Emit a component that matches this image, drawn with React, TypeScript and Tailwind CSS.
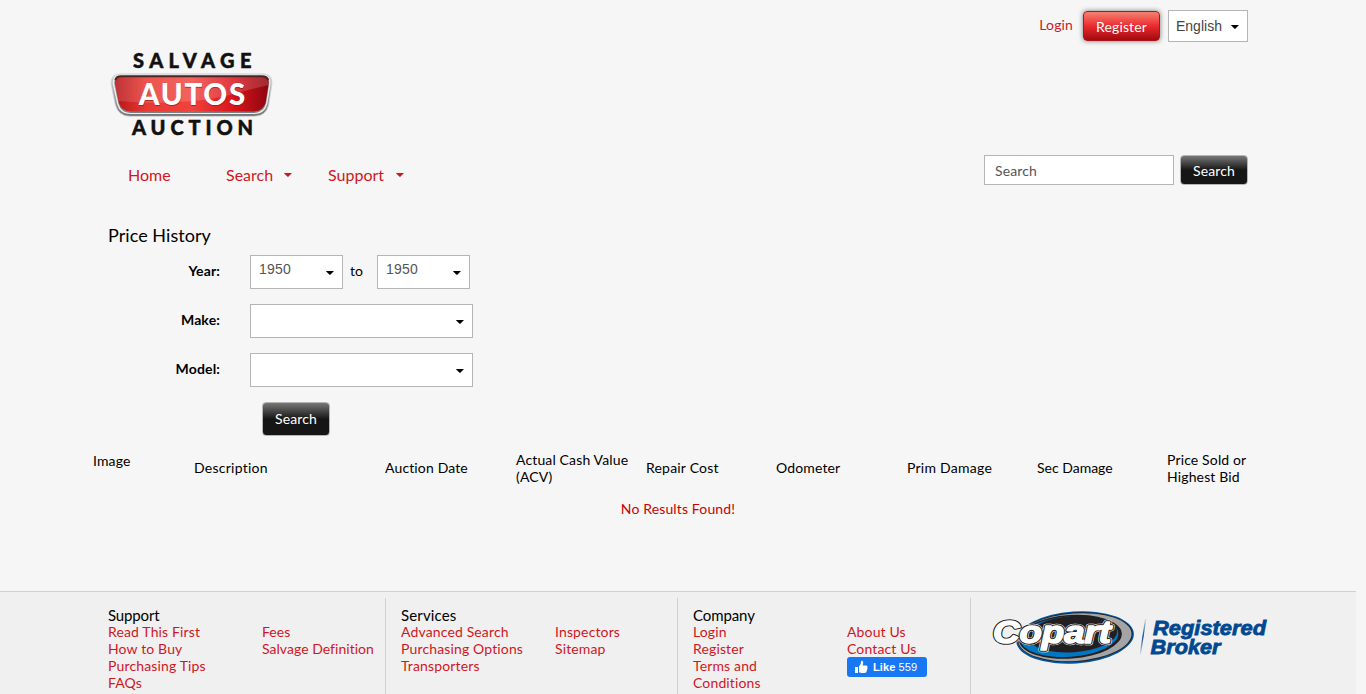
import React from "react";

function Caret({ className = "" }: { className?: string }) {
  return (
    <svg className={`shrink-0 ${className}`} width="8" height="4" viewBox="0 0 8 4" fill="currentColor" aria-hidden="true">
      <path d="M.3 0h7.200v.5L4.300 3.800h-.8L.3.500z" />
    </svg>
  );
}

function SalvageLogo() {
  return (
    <svg width="180" height="95" viewBox="100 45 180 95" className="block shrink-0 tracking-normal" role="img">
      <defs>
        <linearGradient id="chrome" x1="0" y1="0" x2="0" y2="1">
          <stop offset="0" stopColor="#d8d8da" />
          <stop offset=".4" stopColor="#a9abae" />
          <stop offset=".8" stopColor="#8b8d90" />
          <stop offset="1" stopColor="#6d6f72" />
        </linearGradient>
        <linearGradient id="plate" x1="0" y1="0" x2="1" y2="0">
          <stop offset="0" stopColor="#b5161a" />
          <stop offset=".2" stopColor="#e83832" />
          <stop offset=".5" stopColor="#f0433c" />
          <stop offset=".78" stopColor="#d8121b" />
          <stop offset="1" stopColor="#8c070e" />
        </linearGradient>
        <linearGradient id="shine" x1="0" y1="0" x2="1" y2="0">
          <stop offset="0" stopColor="#fff" stopOpacity=".12" />
          <stop offset=".5" stopColor="#fff" stopOpacity=".17" />
          <stop offset="1" stopColor="#fff" stopOpacity=".15" />
        </linearGradient>
      </defs>
      <g fontFamily="Lato, sans-serif" fontWeight="900" fill="#111" stroke="#111" strokeWidth=".5">
        <text x="133" y="67.600" fontSize="20" textLength="118.500" lengthAdjust="spacing">SALVAGE</text>
        <text x="132" y="135" fontSize="20" textLength="121" lengthAdjust="spacing">AUCTION</text>
      </g>
      <path d="M121 73.800H263Q272.800 73.800 272 84L268.700 105Q266 116.300 254 116.300H130Q118.500 116.300 115.300 105L111 84Q110.200 73.800 121 73.800Z" fill="url(#chrome)" stroke="#d8d8d9" strokeWidth=".8" />
      <path d="M121 75.300H262Q270.500 75.300 269.900 84L266.600 104Q264 113.500 253.500 113.500H130.500Q120.500 113.500 117.800 104L113.400 84Q112.600 75.300 121 75.300Z" fill="none" stroke="#f1f1f1" strokeWidth="1.200" />
      <path d="M121 76H262Q269.500 76 268.700 84L265.600 103Q263 111.500 252.500 111.500H131.500Q121.500 111.500 118.900 103L114.900 84Q113.900 76 121 76Z" fill="url(#plate)" />
      <path d="M115 84Q114 77 122 77H261Q269 77 268.500 85Q248 90 222 97Q172 106 119 101Z" fill="url(#shine)" />
      <path d="M115.300 80Q116.500 76.300 121 76.300H262Q266.800 76.300 268.300 80" fill="none" stroke="#4b2526" strokeWidth="2" />
      <g fontFamily="Lato, sans-serif" fontWeight="900" fontSize="29.500">
        <text x="139" y="105.500" fill="#8b1015" opacity=".6" textLength="106.500" lengthAdjust="spacing">AUTOS</text>
        <text x="138.800" y="104.500" fill="#fff" textLength="106.500" lengthAdjust="spacing">AUTOS</text>
      </g>
    </svg>
  );
}

function CopartLogo() {
  return (
    <svg width="290" height="64" viewBox="985 605 290 64" className="block shrink-0 tracking-normal" role="img">
      <defs>
        <linearGradient id="slash" x1="0" y1="0" x2="0" y2="1">
          <stop offset="0" stopColor="#004990" stopOpacity=".1" />
          <stop offset=".5" stopColor="#004990" />
          <stop offset="1" stopColor="#004990" stopOpacity=".1" />
        </linearGradient>
      </defs>
      <g transform="rotate(-4 1075 637.500)">
        <ellipse cx="1075" cy="637.500" rx="59" ry="26" fill="#0057a4" />
        <ellipse cx="1075.200" cy="637.200" rx="57.600" ry="24.700" fill="#231f20" />
        <ellipse cx="1075" cy="637.200" rx="56.700" ry="23.800" fill="#a2a4a6" />
        <ellipse cx="1070.500" cy="636.500" rx="51.500" ry="21.800" fill="#231f20" />
        <ellipse cx="1069.500" cy="636.300" rx="49" ry="20.200" fill="#0077c5" />
        <ellipse cx="1073" cy="634" rx="44.500" ry="18.200" fill="#231f20" />
      </g>
      <g transform="translate(992 643.300)" fontFamily="'Liberation Sans', Arial, sans-serif" fontWeight="700" fontStyle="italic" strokeLinejoin="round">
        <text x="1" y="0" fontSize="31" textLength="118" lengthAdjust="spacingAndGlyphs" fill="#fff" stroke="#fff" strokeWidth="4.400">Copart</text>
        <text x="1" y="0" fontSize="31" textLength="118" lengthAdjust="spacingAndGlyphs" fill="#231f20" stroke="#231f20" strokeWidth="3.500">Copart</text>
        <text x="1" y="0" fontSize="31" textLength="118" lengthAdjust="spacingAndGlyphs" fill="#fff" stroke="#fff" strokeWidth="1.500">Copart</text>
      </g>
      <path d="M1145 619h1.300L1141 654h-1.300Z" fill="url(#slash)" />
      <g fontFamily="'Liberation Sans', Arial, sans-serif" fontWeight="700" fontStyle="italic" fontSize="20" fill="#004990" stroke="#004990" strokeWidth=".8">
        <text x="1153" y="635" textLength="113" lengthAdjust="spacingAndGlyphs">Registered</text>
        <text x="1150.500" y="654.300" textLength="70" lengthAdjust="spacingAndGlyphs">Broker</text>
      </g>
    </svg>
  );
}

function DarkButton({ className }: { className: string }) {
  return (
    <button className={`rounded border border-[#b5b5b5] bg-[linear-gradient(#777_0%,#161616_50%,#161616_100%)] text-center text-white ${className}`}>
      Search
    </button>
  );
}

function SelectBox({ value = "", className }: { value?: string; className: string }) {
  return (
    <div className={`flex h-[34px] justify-between border border-[#b5b5b5] bg-white pl-2 font-['Liberation_Sans',Arial,sans-serif] tracking-[0.2px] text-[#555] ${className}`}>
      <span className="mt-[5px]">{value}</span>
      <Caret className="mt-[15px] mr-2 text-black" />
    </div>
  );
}

function LinkColumn({ links, className = "", children }: { links: string[]; className?: string; children?: React.ReactNode }) {
  return (
    <div className={`flex flex-col text-[#d1171e] ${className}`}>
      {links.map((link) => (
        <a key={link} href="#">{link}</a>
      ))}
      {children}
    </div>
  );
}

function LikeButton() {
  return (
    <button className="flex h-5 w-20 items-center rounded-[3px] bg-[#1877f2] pl-[7px] font-['Liberation_Sans',Arial,sans-serif] text-[11px] text-white">
      <svg width="14" height="14" viewBox="0 0 14 14" fill="currentColor" aria-hidden="true">
        <path d="M1 7h3v6H1zM5 6.200C6.300 5 7 3.700 7 1.500 7 .4 9.200.4 9.200 2.600c0 1-.3 2-.6 2.900h3.500c1.400 0 1.700 1.300 1.100 1.900.6.6.4 1.600-.2 1.900.4.700 0 1.500-.5 1.700.2 1-.4 1.900-1.500 1.900H7.500C6.300 12.900 5.700 12.500 5 12.300z" />
      </svg>
      <b className="ml-[5px]">Like</b>
      <span className="ml-[3px]">559</span>
    </button>
  );
}

const columns: [string, string][] = [
  ["Image", "w-[101px] mb-4"],
  ["Description", "w-[191px] mb-0.5 tracking-[0.25px]"],
  ["Auction Date", "w-[131px] mb-0.5"],
  ["Actual Cash Value (ACV)", "w-[130px] pr-2"],
  ["Repair Cost", "w-[130px] mb-0.5 tracking-[0.2px]"],
  ["Odometer", "w-[131px] mb-0.5"],
  ["Prim Damage", "w-[130px] mb-0.5 tracking-[0.25px]"],
  ["Sec Damage", "w-[130px] mb-0.5 tracking-normal"],
  ["Price Sold or Highest Bid", "w-[100px]"],
];

export default function App() {
  return (
    <div className="flex h-[694px] w-full flex-col overflow-hidden bg-[#f6f6f6] font-[Lato,sans-serif] text-sm leading-[17px] tracking-[0.14px] text-black">
      <header className="flex h-[217px] shrink-0 flex-col">
        <div className="flex h-[45px] items-start justify-end pt-[10px] pr-[118px]">
          <a href="#" className="mt-[6px] mr-[10px] text-[#d1171e]">Login</a>
          <button className="mt-px mr-2 h-[30px] w-[77px] rounded border border-[#b01318] bg-[linear-gradient(#f58271_0%,#ec2a2e_50%,#a00a10_100%)] pt-px text-white shadow-[0_0_5px_#777]">Register</button>
          <div className="flex h-8 w-20 items-center border border-[#b5b5b5] bg-white pt-px pl-[7px] font-['Liberation_Sans',Arial,sans-serif] tracking-normal text-[#444]">
            English<Caret className="mt-px ml-[9px] text-black" />
          </div>
        </div>
        <div className="pl-[100px]"><SalvageLogo /></div>
        <div className="flex items-start pt-[15px] pl-32 pr-[118px]">
          <nav className="mt-[10px] flex text-base leading-5 tracking-normal text-[#d1171e]">
            <a href="#" className="w-[98px]">Home</a>
            <a href="#" className="flex w-[102px]">Search<Caret className="mt-2 ml-[11px]" /></a>
            <a href="#" className="flex">Support<Caret className="mt-2 ml-3" /></a>
          </nav>
          <input placeholder="Search" className="ml-auto h-[30px] w-[190px] border border-[#b5b5b5] bg-white px-[10px] placeholder:text-[#555]" />
          <DarkButton className="ml-1.5 h-[30px] w-[68px] pt-px" />
        </div>
      </header>

      <main className="flex h-[374px] shrink-0 flex-col">
        <h1 className="mt-[7px] pl-[108px] text-lg leading-[22px] tracking-[0.05px]">Price History</h1>
        <form className="mt-[9px] flex flex-col gap-[15px]">
          <div className="flex">
            <label className="mt-[7px] w-[220px] text-right font-bold">Year:</label>
            <SelectBox value="1950" className="ml-[30px] w-[93px]" />
            <span className="mt-[7px] ml-[7px] w-[27px]">to</span>
            <SelectBox value="1950" className="w-[93px]" />
          </div>
          <div className="flex">
            <label className="mt-[7px] w-[220px] text-right font-bold">Make:</label>
            <SelectBox className="ml-[30px] w-[223px]" />
          </div>
          <div className="flex">
            <label className="mt-[7px] w-[220px] text-right font-bold">Model:</label>
            <SelectBox className="ml-[30px] w-[223px]" />
          </div>
          <DarkButton className="ml-[262px] h-[34px] w-[68px] pb-0.5" />
        </form>
        <div className="mt-[15px] flex h-[34px] items-center pl-[93px]">
          {columns.map(([label, size]) => (
            <span key={label} className={`shrink-0 ${size}`}>{label}</span>
          ))}
        </div>
        <p className="mt-[15px] w-[1356px] text-center text-[#cc0000]">No Results Found!</p>
      </main>

      <footer className="flex h-[103px] w-[1356px] shrink-0 border-t border-[#d0d0d0] bg-[#f0f0f0] pt-1.5">
        <section className="w-[386px] border-r border-[#d0d0d0] pt-2 pl-[108px]">
          <h2 className="text-[15px] leading-[18px] tracking-[-0.15px]">Support</h2>
          <div className="-mt-px flex">
            <LinkColumn className="w-[154px]" links={["Read This First", "How to Buy", "Purchasing Tips", "FAQs"]} />
            <LinkColumn className="whitespace-nowrap tracking-[0.03px]" links={["Fees", "Salvage Definition"]} />
          </div>
        </section>
        <section className="w-[292px] border-r border-[#d0d0d0] pt-2 pl-[15px]">
          <h2 className="text-[15px] leading-[18px]">Services</h2>
          <div className="-mt-px flex">
            <LinkColumn className="w-[154px]" links={["Advanced Search", "Purchasing Options", "Transporters"]} />
            <LinkColumn links={["Inspectors", "Sitemap"]} />
          </div>
        </section>
        <section className="w-[293px] border-r border-[#d0d0d0] pt-2 pl-[15px]">
          <h2 className="text-[15px] leading-[18px] tracking-[-0.1px]">Company</h2>
          <div className="-mt-px flex">
            <LinkColumn className="w-[154px] pr-12" links={["Login", "Register", "Terms and Conditions"]} />
            <LinkColumn links={["About Us", "Contact Us"]}><LikeButton /></LinkColumn>
          </div>
        </section>
        <div className="pt-[7px] pl-[14px]"><CopartLogo /></div>
      </footer>
    </div>
  );
}
